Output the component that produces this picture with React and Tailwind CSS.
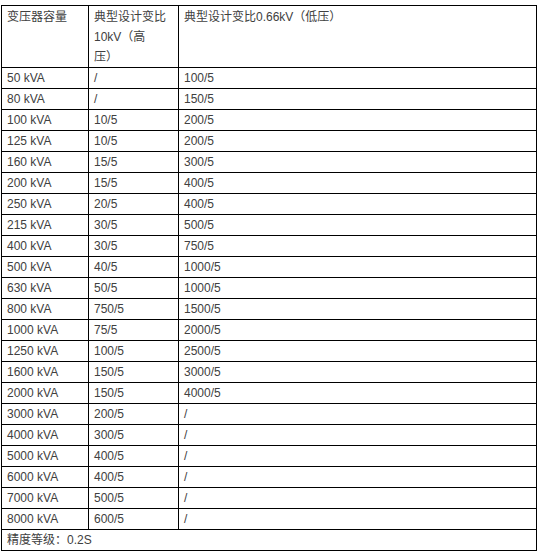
const rows = [
  ["50 kVA", "/", "100/5"],
  ["80 kVA", "/", "150/5"],
  ["100 kVA", "10/5", "200/5"],
  ["125 kVA", "10/5", "200/5"],
  ["160 kVA", "15/5", "300/5"],
  ["200 kVA", "15/5", "400/5"],
  ["250 kVA", "20/5", "400/5"],
  ["215 kVA", "30/5", "500/5"],
  ["400 kVA", "30/5", "750/5"],
  ["500 kVA", "40/5", "1000/5"],
  ["630 kVA", "50/5", "1000/5"],
  ["800 kVA", "750/5", "1500/5"],
  ["1000 kVA", "75/5", "2000/5"],
  ["1250 kVA", "100/5", "2500/5"],
  ["1600 kVA", "150/5", "3000/5"],
  ["2000 kVA", "150/5", "4000/5"],
  ["3000 kVA", "200/5", "/"],
  ["4000 kVA", "300/5", "/"],
  ["5000 kVA", "400/5", "/"],
  ["6000 kVA", "400/5", "/"],
  ["7000 kVA", "500/5", "/"],
  ["8000 kVA", "600/5", "/"],
];

const cell = "border border-black px-[5px] py-0 h-[21px] leading-[20px] align-middle text-left font-normal";
const head = "border border-black px-[5px] pt-[1px] pb-0 leading-[20px] align-top text-left font-normal";

export default function App() {
  return (
    <div className="min-h-screen bg-white pt-[5px] pl-[1px] text-[12px] text-[#404040] [text-spacing-trim:space-all] font-['Liberation_Sans','Noto_Sans_CJK_SC',sans-serif]">
      <table className="w-[536px] table-fixed border-collapse">
        <colgroup>
          <col className="w-[87px]" />
          <col className="w-[90px]" />
          <col />
        </colgroup>
        <thead>
          <tr>
            <th className={head}>变压器容量</th>
            <th className={head}>
              典型设计变比
              <br />
              10kV（高
              <br />
              压）
            </th>
            <th className={head}>典型设计变比0.66kV（低压）</th>
          </tr>
        </thead>
        <tbody>
          {rows.map((r, i) => (
            <tr key={i}>
              {r.map((v, j) => (
                <td key={j} className={cell}>
                  {v}
                </td>
              ))}
            </tr>
          ))}
          <tr>
            <td colSpan={3} className={cell}>
              精度等级：0.2S
            </td>
          </tr>
        </tbody>
      </table>
    </div>
  );
}
